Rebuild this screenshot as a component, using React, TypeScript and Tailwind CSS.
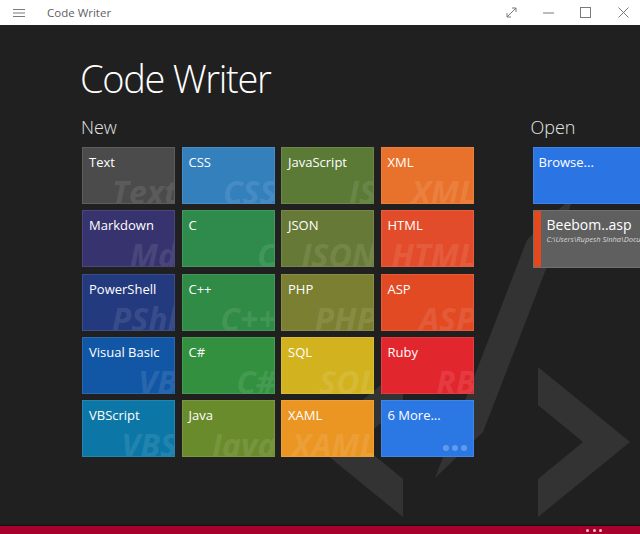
import React from 'react';

// Tuiles du panneau "New"
interface Tile {
  name: string;
  mark: string;
  bg: string;
}

const tiles: Tile[] = [
  { name: 'Text', mark: 'Text', bg: 'bg-[#4b4b4b]' },
  { name: 'CSS', mark: 'CSS', bg: 'bg-[#3380bd]' },
  { name: 'JavaScript', mark: 'JS', bg: 'bg-[#5a7a36]' },
  { name: 'XML', mark: 'XML', bg: 'bg-[#e8722b]' },
  { name: 'Markdown', mark: 'Md', bg: 'bg-[#37336e]' },
  { name: 'C', mark: 'C', bg: 'bg-[#2f8b4b]' },
  { name: 'JSON', mark: 'JSON', bg: 'bg-[#677936]' },
  { name: 'HTML', mark: 'HTML', bg: 'bg-[#e34c2a]' },
  { name: 'PowerShell', mark: 'PShl', bg: 'bg-[#243a7e]' },
  { name: 'C++', mark: 'C++', bg: 'bg-[#2f8b45]' },
  { name: 'PHP', mark: 'PHP', bg: 'bg-[#7b7f31]' },
  { name: 'ASP', mark: 'ASP', bg: 'bg-[#e24a24]' },
  { name: 'Visual Basic', mark: 'VB', bg: 'bg-[#1257a6]' },
  { name: 'C#', mark: 'C#', bg: 'bg-[#32903f]' },
  { name: 'SQL', mark: 'SQL', bg: 'bg-[#d2b21f]' },
  { name: 'Ruby', mark: 'RB', bg: 'bg-[#e2262d]' },
  { name: 'VBScript', mark: 'VBS', bg: 'bg-[#0c77a6]' },
  { name: 'Java', mark: 'Java', bg: 'bg-[#6a8b2b]' },
  { name: 'XAML', mark: 'XAML', bg: 'bg-[#eb9523]' },
  { name: '6 More...', mark: '', bg: 'bg-[#2b78e4]' },
];

const TitleBar: React.FC = () => (
  <div className="h-[25px] bg-white flex items-center text-[#6b6b6b] shrink-0">
    <svg width="12" height="10" viewBox="0 0 12 10" className="ml-[13px]">
      <path d="M0 1.5h12M0 5h12M0 8.5h12" stroke="#7a7a7a" strokeWidth="1" />
    </svg>
    <span className="ml-[22px] text-[11.5px] text-[#5f5f5f] font-['Open_Sans',sans-serif]">Code Writer</span>
    <div className="ml-auto flex items-center">
      <svg width="11" height="11" viewBox="0 0 11 11" className="mr-[26px]">
        <path d="M1 10L10 1M6 1h4v4M1 6v4h4" stroke="#7a7a7a" strokeWidth="1" fill="none" />
      </svg>
      <svg width="11" height="11" viewBox="0 0 11 11" className="mr-[26px]">
        <path d="M0 6h11" stroke="#7a7a7a" strokeWidth="1" />
      </svg>
      <svg width="11" height="11" viewBox="0 0 11 11" className="mr-[27px]">
        <rect x="0.5" y="0.5" width="10" height="10" stroke="#7a7a7a" strokeWidth="1" fill="none" />
      </svg>
      <svg width="11" height="11" viewBox="0 0 11 11" className="mr-[11px]">
        <path d="M0.5 0.5l10 10M10.5 0.5l-10 10" stroke="#7a7a7a" strokeWidth="1" />
      </svg>
    </div>
  </div>
);

const App: React.FC = () => {
  return (
    <div className="relative w-[640px] h-[534px] overflow-hidden bg-[#202020] flex flex-col font-['Open_Sans',sans-serif]">
      {/* Logo </> en filigrane */}
      <svg className="absolute left-0 top-0" width="640" height="534" viewBox="0 0 640 534">
        <polygon points="538,367 630,442 538,517 538,479 583,442 538,405" fill="#333333" />
        <polygon points="403,367 311,442 403,517 403,479 358,442 403,405" fill="#333333" />
        <polygon points="435,478 483,432 575,194 527,240" fill="#333333" />
      </svg>

      <TitleBar />

      <div className="relative flex-1 pl-[80px] pt-[34px]">
        <h1 className="text-[38px] leading-none font-light text-white tracking-[-1.3px]">Code Writer</h1>

        <div className="flex mt-[18px]">
          <div>
            <h2 className="text-[18px] leading-[24px] font-light text-[#e6e6e6] ml-[1px]">New</h2>
            <div className="ml-[2px] mt-[8px] grid grid-cols-[repeat(4,93px)] auto-rows-[57px] gap-x-[6.5px] gap-y-[6.3px]">
              {tiles.map((t) => (
                <div
                  key={t.name}
                  className={`relative overflow-hidden border border-white/10 ${t.bg} px-[6px] pt-[1px]`}
                >
                  <span className="text-[13px] leading-[16px] text-white">{t.name}</span>
                  {t.mark ? (
                    <span className="absolute right-[-3px] bottom-[-9px] text-[32px] leading-[40px] font-bold italic text-white/[0.11] whitespace-nowrap">
                      {t.mark}
                    </span>
                  ) : (
                    <span className="absolute right-[6px] bottom-[5px] flex gap-[3px]">
                      <span className="w-[6px] h-[6px] rounded-full bg-white/25" />
                      <span className="w-[6px] h-[6px] rounded-full bg-white/25" />
                      <span className="w-[6px] h-[6px] rounded-full bg-white/25" />
                    </span>
                  )}
                </div>
              ))}
            </div>
          </div>

          <div className="ml-[57px]">
            <h2 className="text-[18px] leading-[24px] font-light text-[#e6e6e6]">Open</h2>
            <div className="ml-[2px] mt-[8px] w-[140px] flex flex-col gap-[6px]">
              <div className="h-[57px] bg-[#2a74e4] border border-white/10 px-[5px] pt-[1px]">
                <span className="text-[13px] leading-[16px] text-white">Browse...</span>
              </div>
              <div className="h-[58px] bg-[#5f5f5f] flex border border-white/10">
                <div className="w-[7px] bg-[#e2491d] shrink-0" />
                <div className="pl-[6px] pt-[5px] whitespace-nowrap">
                  <div className="text-[14px] leading-[17px] text-white">Beebom..asp</div>
                  <div className="mt-[1px] text-[7.5px] leading-[10px] italic text-[#d8d8d8]">C:\Users\Rupesh Sinha\Documents</div>
                </div>
              </div>
            </div>
          </div>
        </div>
      </div>

      <div className="relative h-[8px] bg-[#a8002d] shrink-0 shadow-[0_-1px_2px_rgba(0,0,0,0.5)] flex items-center justify-end pr-[38px] gap-[3.5px]">
        <span className="w-[3px] h-[3px] rounded-full bg-[#f3c6d2]" />
        <span className="w-[3px] h-[3px] rounded-full bg-[#f3c6d2]" />
        <span className="w-[3px] h-[3px] rounded-full bg-[#f3c6d2]" />
      </div>
    </div>
  );
};

export default App;
